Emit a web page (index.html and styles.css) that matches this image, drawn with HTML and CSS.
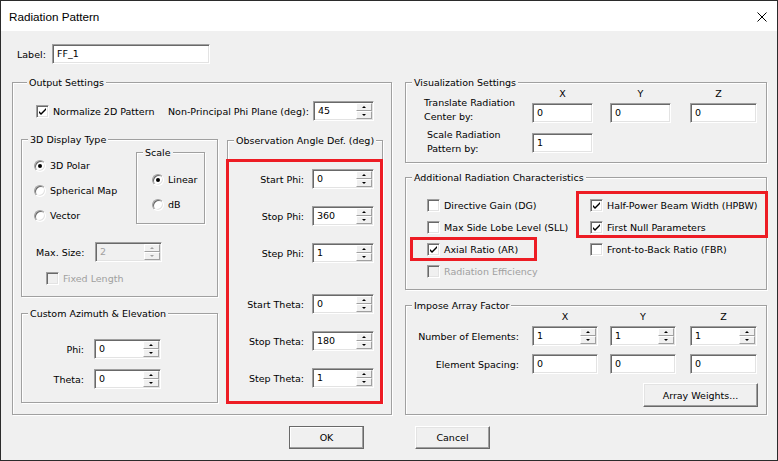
FILE: index.html
```html
<!DOCTYPE html>
<html><head><meta charset="utf-8"><title>Radiation Pattern</title><link rel="stylesheet" href="styles.css"></head>
<body>
<div class="win">
  <div class="titlebar">
    <span class="title">Radiation Pattern</span>
    <svg class="close" width="10" height="10" viewBox="0 0 10 10"><path d="M0.5 0.5L9.5 9.5M9.5 0.5L0.5 9.5" stroke="#000" stroke-width="1" fill="none"/></svg>
  </div>
  <div class="body">
    <div class="labelrow"><span class="lbl">Label:</span><div class="edit w158">FF_1</div></div>
    <div class="main">
      <div class="group output">
        <div class="gt">Output Settings</div>
        <div class="row1">
          <div class="ci w132"><span class="cb"><svg width="13" height="13" viewBox="0 0 13 13"><polygon points="3,6 5,8 10,3 10,5 5,10 3,8" fill="#000"/></svg></span>Normalize 2D Pattern</div>
          <span class="np">Non-Principal Phi Plane (deg):</span>
          <div class="spin w61"><span class="sv">45</span><span class="sb"><i class="up"></i><i class="dn"></i></span></div>
        </div>
        <div class="cols">
          <div class="leftcol">
            <div class="group g3d">
              <div class="gt">3D Display Type</div>
              <div class="d3top">
                <div class="radios">
                  <div class="ri"><span class="rd on"></span>3D Polar</div>
                  <div class="ri"><span class="rd"></span>Spherical Map</div>
                  <div class="ri"><span class="rd"></span>Vector</div>
                </div>
                <div class="group scale">
                  <div class="gt">Scale</div>
                  <div class="radios sc">
                    <div class="ri"><span class="rd on"></span>Linear</div>
                    <div class="ri"><span class="rd"></span>dB</div>
                  </div>
                </div>
              </div>
              <div class="maxrow"><span class="mlbl">Max. Size:</span><div class="spin w67 dis"><span class="sv">2</span><span class="sb"><i class="up"></i><i class="dn"></i></span></div></div>
              <div class="ci dis fixrow"><span class="cb dis"></span>Fixed Length</div>
            </div>
            <div class="group gcust">
              <div class="gt">Custom Azimuth &amp; Elevation</div>
              <div class="crow first"><span class="clbl">Phi:</span><div class="spin w67"><span class="sv">0</span><span class="sb"><i class="up"></i><i class="dn"></i></span></div></div>
              <div class="crow"><span class="clbl">Theta:</span><div class="spin w67"><span class="sv">0</span><span class="sb"><i class="up"></i><i class="dn"></i></span></div></div>
            </div>
          </div>
          <div class="group obs">
            <div class="gt">Observation Angle Def. (deg)</div>
            <div class="orow first"><span class="olbl">Start Phi:</span><div class="spin w62"><span class="sv">0</span><span class="sb"><i class="up"></i><i class="dn"></i></span></div></div>
            <div class="orow"><span class="olbl">Stop Phi:</span><div class="spin w62"><span class="sv">360</span><span class="sb"><i class="up"></i><i class="dn"></i></span></div></div>
            <div class="orow"><span class="olbl">Step Phi:</span><div class="spin w62"><span class="sv">1</span><span class="sb"><i class="up"></i><i class="dn"></i></span></div></div>
            <div class="orow wide"><span class="olbl">Start Theta:</span><div class="spin w62"><span class="sv">0</span><span class="sb"><i class="up"></i><i class="dn"></i></span></div></div>
            <div class="orow"><span class="olbl">Stop Theta:</span><div class="spin w62"><span class="sv">180</span><span class="sb"><i class="up"></i><i class="dn"></i></span></div></div>
            <div class="orow"><span class="olbl">Step Theta:</span><div class="spin w62"><span class="sv">1</span><span class="sb"><i class="up"></i><i class="dn"></i></span></div></div>
            <div class="redbox rb-obs"></div>
          </div>
        </div>
      </div>
      <div class="rightcol">
        <div class="group vis">
          <div class="gt">Visualization Settings</div>
          <div class="vbody">
            <div class="vlabels">
              <div class="vl1">Translate Radiation<br>Center by:</div>
              <div class="vl2">Scale Radiation<br>Pattern by:</div>
            </div>
            <div class="vfields">
              <div class="hdr"><span class="hx">X</span><span class="hy">Y</span><span class="hz">Z</span></div>
              <div class="frow fr1"><div class="edit w61">0</div><div class="edit w61 ml17">0</div><div class="edit w67 ml19">0</div></div>
              <div class="frow fr2"><div class="edit w61">1</div></div>
            </div>
          </div>
        </div>
        <div class="group add">
          <div class="gt">Additional Radiation Characteristics</div>
          <div class="addcols">
            <div class="acol a1">
              <div class="ci"><span class="cb"></span>Directive Gain (DG)</div>
              <div class="ci"><span class="cb"></span>Max Side Lobe Level (SLL)</div>
              <div class="ci"><span class="cb"><svg width="13" height="13" viewBox="0 0 13 13"><polygon points="3,6 5,8 10,3 10,5 5,10 3,8" fill="#000"/></svg></span>Axial Ratio (AR)</div>
              <div class="ci dis"><span class="cb dis"></span>Radiation Efficiency</div>
            </div>
            <div class="acol">
              <div class="ci"><span class="cb"><svg width="13" height="13" viewBox="0 0 13 13"><polygon points="3,6 5,8 10,3 10,5 5,10 3,8" fill="#000"/></svg></span>Half-Power Beam Width (HPBW)</div>
              <div class="ci"><span class="cb"><svg width="13" height="13" viewBox="0 0 13 13"><polygon points="3,6 5,8 10,3 10,5 5,10 3,8" fill="#000"/></svg></span>First Null Parameters</div>
              <div class="ci"><span class="cb"></span>Front-to-Back Ratio (FBR)</div>
            </div>
          </div>
          <div class="redbox rb1"></div>
          <div class="redbox rb2"></div>
        </div>
        <div class="group imp">
          <div class="gt">Impose Array Factor</div>
          <div class="irow ihdr"><span class="ilbl"></span><span class="ix">X</span><span class="iy">Y</span><span class="iz">Z</span></div>
          <div class="irow ir1"><span class="ilbl">Number of Elements:</span>
            <div class="spin w66"><span class="sv">1</span><span class="sb"><i class="up"></i><i class="dn"></i></span></div>
            <div class="spin w66 ml12"><span class="sv">1</span><span class="sb"><i class="up"></i><i class="dn"></i></span></div>
            <div class="spin w67 ml14"><span class="sv">1</span><span class="sb"><i class="up"></i><i class="dn"></i></span></div>
          </div>
          <div class="irow ir2"><span class="ilbl">Element Spacing:</span>
            <div class="edit w66">0</div><div class="edit w66 ml12">0</div><div class="edit w67 ml14">0</div>
          </div>
          <div class="irow ir3"><div class="btn aw">Array Weights...</div></div>
        </div>
      </div>
    </div>
    <div class="btnrow"><div class="btn def">OK</div><div class="btn">Cancel</div></div>
  </div>
</div>
</body></html>
```

FILE: styles.css
```css
* { box-sizing: border-box; }
html, body { margin: 0; padding: 0; background: #fff; }
body { font-family: "DejaVu Sans", "Liberation Sans", sans-serif; font-size: 9.5px; line-height: 13px; color: #000; }

.win { width: 778px; height: 461px; border: 1px solid #2b2b2b; background: #f0f0f0; display: flex; flex-direction: column; }
.titlebar { flex: none; height: 30px; background: #fff; display: flex; align-items: center; padding: 1px 10px 0 8px; }
.title { flex: 1; font-family: "Liberation Sans", sans-serif; font-size: 11.7px; }
.close { display: block; }

.body { flex: 1; padding: 13px 10px 0 11px; }
.labelrow { display: flex; align-items: center; height: 20px; padding-left: 5px; }
.lbl { width: 35px; }

.edit, .spin { height: 20px; background: #fff; border: 1px solid; border-color: #a0a0a0 #fff #fff #a0a0a0; box-shadow: inset 1px 1px 0 #696969, inset -1px -1px 0 #e3e3e3; flex: none; }
.edit { padding-left: 4px; line-height: 18px; }
.spin { display: flex; padding: 1px; }
.sv { flex: 1; padding-left: 3px; line-height: 16px; }
.sb { width: 16px; display: flex; flex-direction: column; }
.sb i { flex: 1; display: flex; align-items: center; justify-content: center; background: #f0f0f0; border: 1px solid; border-color: #fff #a0a0a0 #a0a0a0 #fff; }
.sb i.up::after { content: ""; border-left: 2px solid transparent; border-right: 2px solid transparent; border-bottom: 2px solid #000; }
.sb i.dn::after { content: ""; border-left: 2px solid transparent; border-right: 2px solid transparent; border-top: 2px solid #000; }
.spin.dis { background: #f0f0f0; color: #a0a0a0; }
.spin.dis .sb i::after { border-bottom-color: #a0a0a0; border-top-color: #a0a0a0; }
.spin.dis .sb i.up::after { border-top-color: transparent; }
.spin.dis .sb i.dn::after { border-bottom-color: transparent; }

.w158 { width: 158px; }
.w61 { width: 61px; }
.w62 { width: 62px; }
.w66 { width: 66px; }
.w67 { width: 67px; }
.w132 { width: 132px; }
.ml12 { margin-left: 12px; }
.ml14 { margin-left: 14px; }
.ml17 { margin-left: 17px; }
.ml19 { margin-left: 19px; }

.group { border: 1px solid #a0a0a0; box-shadow: inset 1px 1px 0 #fff, 1px 1px 0 #fff; flex: none; }
.gt { display: block; width: max-content; height: 13px; margin: -7px 0 -6px 6px; padding: 0 2px; background: #f0f0f0; white-space: nowrap; }

.ci { display: flex; align-items: center; height: 13px; white-space: nowrap; }
.cb { width: 13px; height: 13px; flex: none; margin-right: 4px; background: #fff; border: 1px solid; border-color: #a0a0a0 #fff #fff #a0a0a0; box-shadow: inset 1px 1px 0 #696969, inset -1px -1px 0 #e3e3e3; position: relative; }
.cb svg { display: block; margin: -1px; }
.cb.dis { background: #f0f0f0; }
.ci.dis { color: #a0a0a0; }

.rd { width: 12px; height: 12px; flex: none; margin-right: 4px; border-radius: 50%; background: #fff; border: 1px solid; border-color: #a0a0a0 #fff #fff #a0a0a0; box-shadow: inset 1px 1px 0 #696969, inset -1px -1px 0 #e3e3e3; display: flex; align-items: center; justify-content: center; }
.rd.on::after { content: ""; width: 4px; height: 4px; border-radius: 50%; background: #000; }
.ri { display: flex; align-items: center; height: 13px; white-space: nowrap; }

.main { display: flex; gap: 13px; margin-top: 18px; }
.output { width: 380px; height: 333px; padding: 0 8px; }
.row1 { display: flex; align-items: center; height: 20px; margin-top: 18px; padding-left: 15px; }
.np { width: 145px; white-space: nowrap; }
.cols { display: flex; gap: 9px; margin-top: 18px; }
.leftcol { width: 197px; display: flex; flex-direction: column; gap: 16px; }
.g3d { height: 158px; }
.d3top { display: flex; height: 84px; }
.radios { display: flex; flex-direction: column; gap: 12px; padding: 19px 0 0 12px; }
.radios.sc { padding: 20px 0 0 15px; }
.scale { width: 69px; height: 72px; margin: 12px 12px 0 auto; }
.maxrow { display: flex; align-items: center; height: 20px; margin-top: 18px; padding-left: 14px; }
.mlbl { width: 59px; }
.fixrow { margin-top: 10px; padding-left: 24px; }
.gcust { height: 90px; }
.crow { display: flex; align-items: center; height: 20px; margin-top: 10px; }
.crow.first { margin-top: 25px; }
.clbl { width: 62px; margin-right: 10px; text-align: right; }

.obs { width: 156px; height: 263px; margin-top: 1px; position: relative; }
.orow { display: flex; align-items: center; height: 20px; margin-top: 17px; }
.orow.first { margin-top: 28px; }
.orow.wide { margin-top: 31px; }
.olbl { width: 76px; margin-right: 8px; text-align: right; white-space: nowrap; }

.redbox { position: absolute; border: 3px solid #ed1c24; pointer-events: none; }
.rb-obs { left: -2px; top: 18px; width: 157px; height: 245px; }
.rb1 { left: 170px; top: 13px; width: 192px; height: 47px; }
.rb2 { left: 4px; top: 59px; width: 127px; height: 24px; }

.rightcol { width: 362px; display: flex; flex-direction: column; }
.vis { height: 81px; }
.vbody { display: flex; }
.vlabels { width: 126px; padding-left: 18px; }
.vl1 { margin-top: 13px; line-height: 14px; white-space: nowrap; }
.vl2 { margin-top: 4px; padding-left: 3px; line-height: 14px; white-space: nowrap; }
.hdr { display: flex; height: 13px; margin-top: 4px; }
.hx { width: 61px; text-align: center; }
.hy { width: 61px; margin-left: 17px; text-align: center; }
.hz { width: 57px; margin-left: 19px; text-align: center; }
.frow { display: flex; height: 20px; }
.fr1 { margin-top: 3px; }
.fr2 { margin-top: 10px; }

.add { height: 113px; margin-top: 14px; position: relative; }
.addcols { display: flex; margin-top: 21px; padding-left: 21px; }
.acol { display: flex; flex-direction: column; gap: 9px; }
.a1 { width: 163px; }

.imp { height: 110px; margin-top: 15px; padding-right: 8px; }
.irow { display: flex; align-items: center; }
.ihdr { height: 13px; margin-top: 4px; }
.ix { width: 66px; text-align: center; }
.iy { width: 66px; margin-left: 12px; text-align: center; }
.iz { width: 67px; margin-left: 14px; text-align: center; }
.ilbl { width: 126px; padding-right: 13px; text-align: right; white-space: nowrap; }
.ir1 { height: 20px; margin-top: 3px; }
.ir2 { height: 20px; margin-top: 8px; }
.ir3 { justify-content: flex-end; margin-top: 9px; }

.btn { width: 75px; height: 23px; display: flex; align-items: center; justify-content: center; background: #f0f0f0; border: 1px solid; border-color: #fff #696969 #696969 #fff; box-shadow: inset -1px -1px 0 #a0a0a0, inset 1px 1px 0 #e3e3e3; }
.btn.def { border-color: #696969; box-shadow: inset -1px -1px 0 #a0a0a0, inset 1px 1px 0 #fff; }
.aw { width: 115px; height: 24px; }
.btnrow { display: flex; justify-content: center; gap: 51px; margin-top: 11px; }
```
